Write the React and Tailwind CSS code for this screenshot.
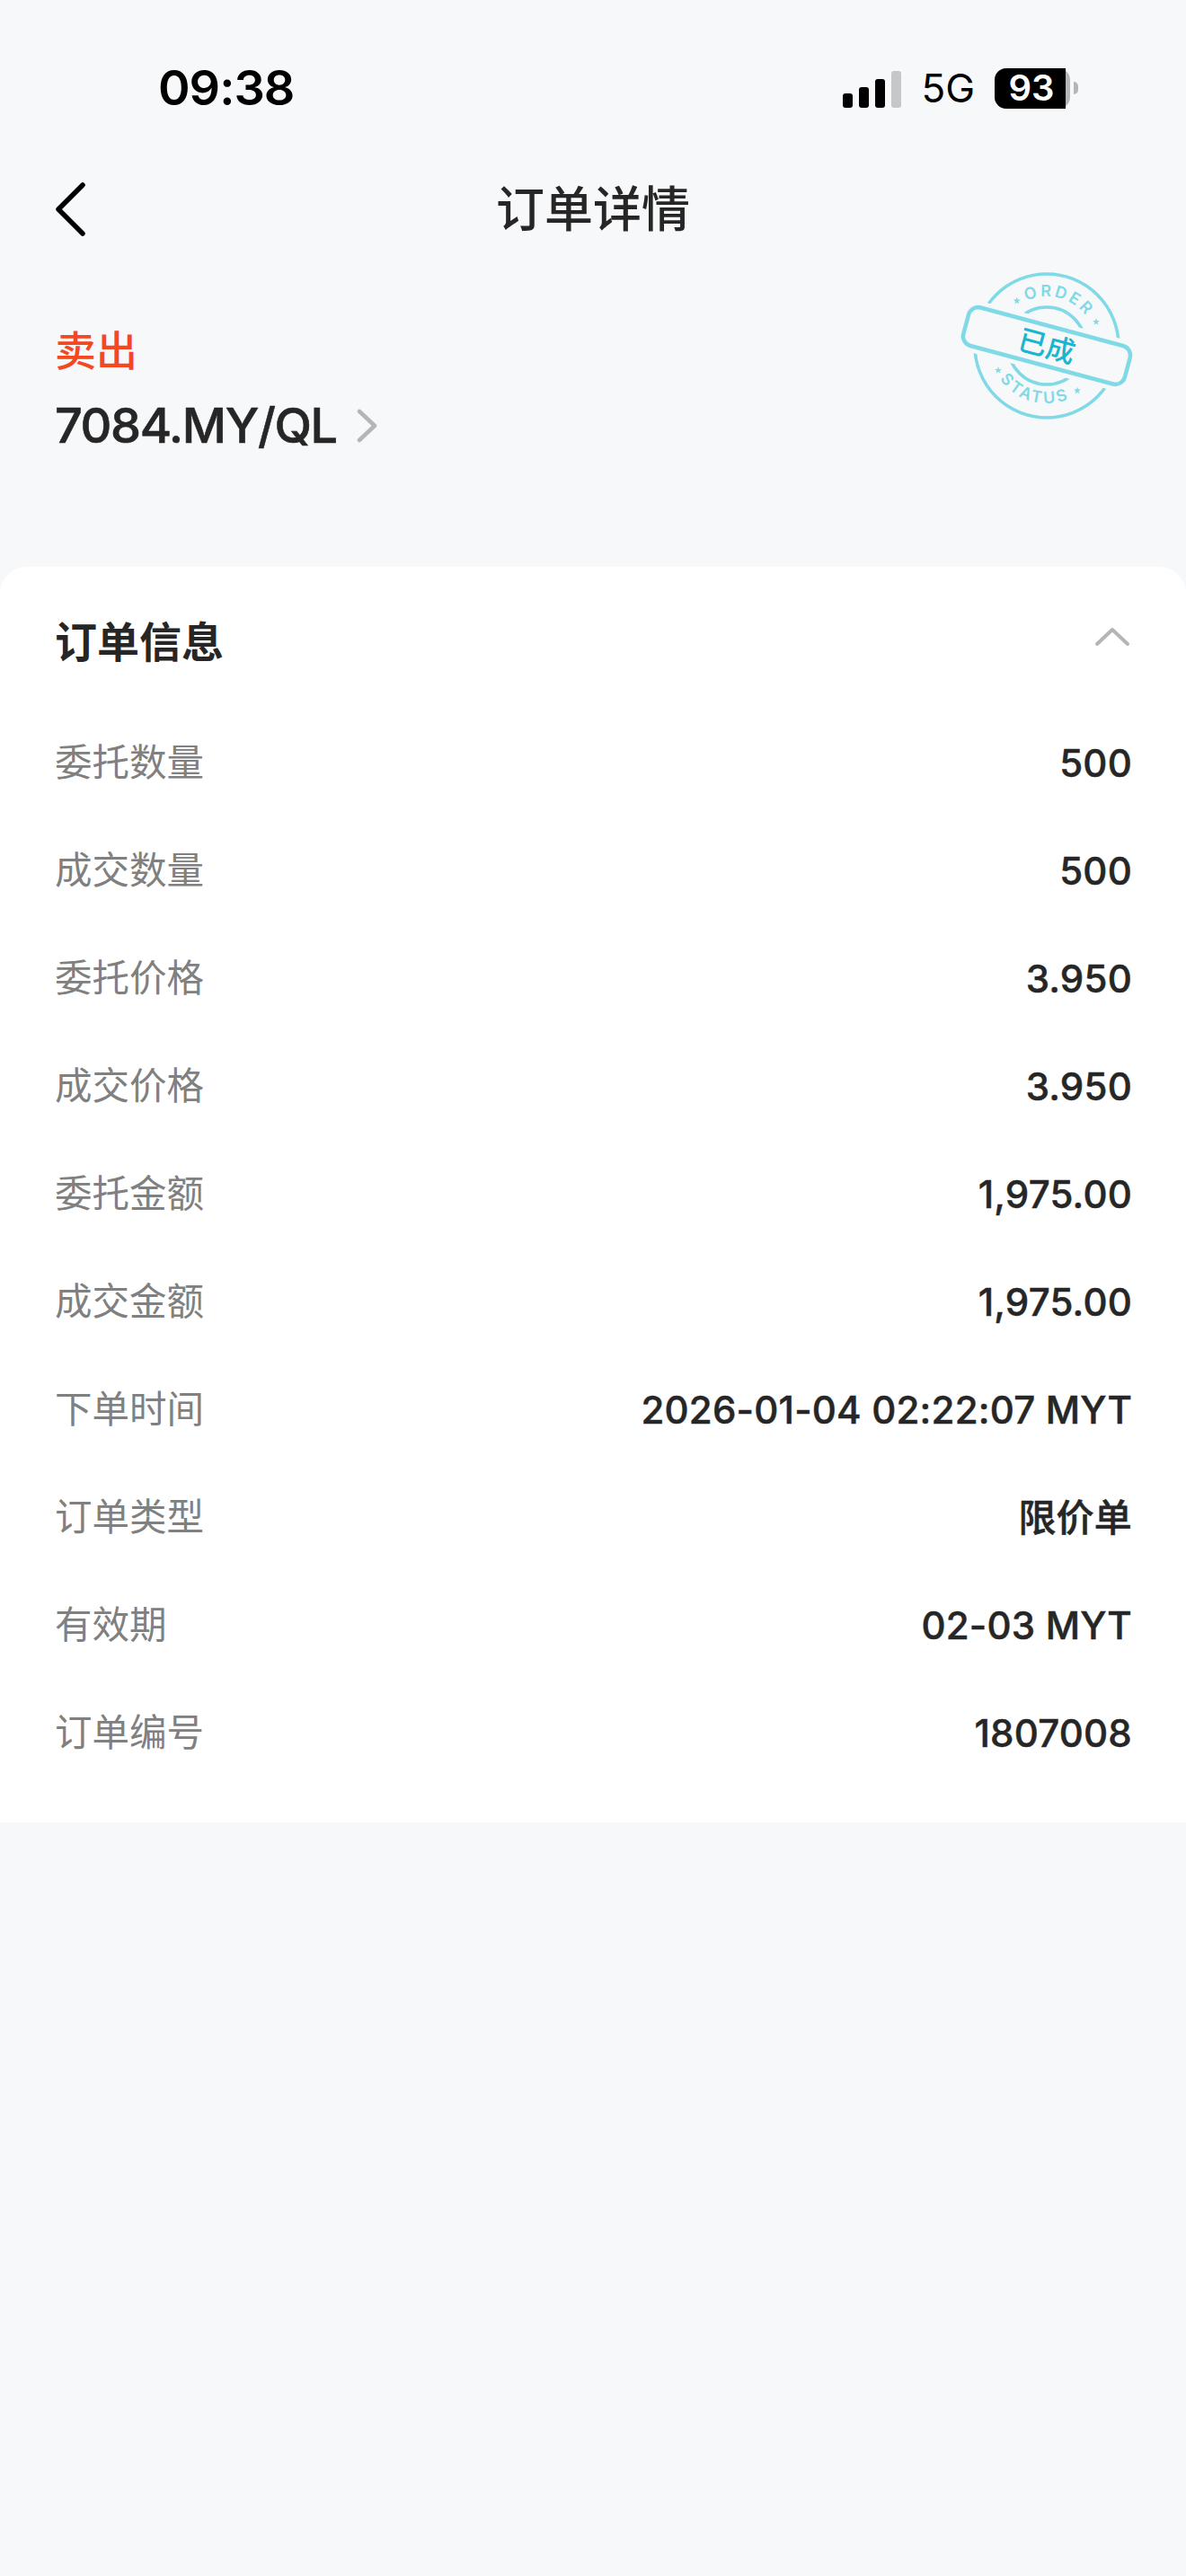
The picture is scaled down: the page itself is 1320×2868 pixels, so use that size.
const FONT = "font-['Inter','Noto_Sans_CJK_SC',sans-serif]";

const rows = [
  ["委托数量", "500"],
  ["成交数量", "500"],
  ["委托价格", "3.950"],
  ["成交价格", "3.950"],
  ["委托金额", "1,975.00"],
  ["成交金额", "1,975.00"],
  ["下单时间", "2026-01-04 02:22:07 MYT"],
  ["订单类型", "限价单"],
  ["有效期", "02-03 MYT"],
  ["订单编号", "1807008"],
];

function Star({ x, y }) {
  const pts = [];
  for (let i = 0; i < 10; i++) {
    const r = i % 2 ? 1.7 : 4.2;
    const a = (Math.PI / 5) * i - Math.PI / 2;
    pts.push(`${x + r * Math.cos(a)},${y + r * Math.sin(a)}`);
  }
  return <polygon points={pts.join(" ")} fill="#7fd9e6" />;
}

// 已成 stamp, drawn in a 230x190 box
function Stamp() {
  return (
    <svg width="230" height="190" viewBox="0 0 230 190" className="shrink-0">
      <defs>
        <path id="stamp-top" d="M60 95 A55 55 0 0 1 170 95" />
        <path id="stamp-bottom" d="M51 95 A64 64 0 0 0 179 95" />
      </defs>
      <g fill="none" stroke="#7fd9e6">
        <circle cx="115" cy="95" r="80" strokeWidth="3.5" />
        <circle cx="115" cy="95" r="43" strokeWidth="3.5" />
      </g>
      <Star x={81.7} y={45} />
      <Star x={170} y={68.3} />
      <Star x={61} y={122.3} />
      <Star x={149} y={145} />
      <g transform="rotate(15 115 95)">
        <text fontSize="18" letterSpacing="3" fill="#7fd9e6" fontFamily="Inter, sans-serif" fontWeight="600" textAnchor="middle">
          <textPath href="#stamp-top" startOffset="50%">ORDER</textPath>
        </text>
        <text fontSize="18" letterSpacing="3" fill="#7fd9e6" fontFamily="Inter, sans-serif" fontWeight="600" textAnchor="middle">
          <textPath href="#stamp-bottom" startOffset="50%">STATUS</textPath>
        </text>
        <rect x="22" y="73" width="186" height="44" rx="11" fill="#f7f8fa" stroke="#f7f8fa" strokeWidth="14" />
        <rect x="22" y="73" width="186" height="44" rx="11" fill="#f7f8fa" stroke="#7fd9e6" strokeWidth="4.5" />
        <text x="115" y="107" fontSize="32" fontWeight="500" fill="#19b5d1" textAnchor="middle" fontFamily="'Noto Sans CJK SC', sans-serif">已成</text>
      </g>
    </svg>
  );
}

function StatusBar() {
  return (
    <div className="flex items-center h-[140px] pt-[56px] pl-[176px] pr-[120px] justify-between">
      <span className="text-[54px] leading-none font-semibold tracking-[-1px] text-black">09:38</span>
      <div className="flex items-center">
        <div className="flex items-end gap-[7px] h-[41px] mt-[2px]">
          <div className="w-[11px] h-[16px] rounded-[3px] bg-black" />
          <div className="w-[11px] h-[23px] rounded-[3px] bg-black" />
          <div className="w-[11px] h-[32px] rounded-[3px] bg-black" />
          <div className="w-[11px] h-[41px] rounded-[3px] bg-[#c6c7c9]" />
        </div>
        <span className="ml-[22px] text-[44px] leading-none text-black">5G</span>
        <div className="ml-[22px] relative flex items-center justify-center w-[84px] h-[45px] rounded-[13px] bg-[#b5b6b8]">
          <div className="absolute left-0 top-0 h-full w-[79px] bg-black rounded-l-[13px]" />
          <span className="relative pr-[2px] text-[40px] leading-none font-semibold text-white">93</span>
        </div>
        <div className="ml-[4px] w-[5px] h-[14px] rounded-r-full bg-[#b5b6b8]" />
      </div>
    </div>
  );
}

export default function App() {
  return (
    <div className={`${FONT} w-full min-h-[2868px] bg-[#f7f8fa] text-[#262626]`}>
      <StatusBar />

      <header className="relative flex items-center justify-center h-[112px] mt-[38px]">
        <svg width="36" height="60" viewBox="0 0 36 60" className="absolute left-[61px] top-[25px]" fill="none" stroke="#000" strokeWidth="5.5" strokeLinecap="round" strokeLinejoin="round">
          <path d="M31 3 L4 30 L31 57" />
        </svg>
        <h1 className="text-[54px] leading-none font-medium">订单详情</h1>
      </header>

      <div className="flex justify-between items-start pl-[61px] pr-[40px] h-[341px]">
        <div className="pt-[77px]">
          <p className="text-[46px] leading-none font-medium text-[#f4481f]">卖出</p>
          <div className="flex items-center mt-[29px]">
            <span className="text-[54px] leading-[64px] font-medium tracking-[-1.4px] [-webkit-text-stroke:0.6px_#262626]">7084.MY/QL</span>
            <svg width="24" height="38" viewBox="0 0 24 38" className="ml-[22px]" fill="none" stroke="#b5b5b5" strokeWidth="4.5" strokeLinecap="round" strokeLinejoin="round">
              <path d="M3 3 L20 19 L3 35" />
            </svg>
          </div>
        </div>
        <Stamp />
      </div>

      <section className="bg-white rounded-t-[30px] h-[1398px] pl-[61px] pr-[60px]">
        <div className="flex items-center justify-between h-[159px] pt-[10px] pb-[2px]">
          <h2 className="text-[47px] leading-none font-semibold">订单信息</h2>
          <svg width="40" height="22" viewBox="0 0 40 22" className="mb-[12px] mr-[2px]" fill="none" stroke="#b5b5b5" strokeWidth="4" strokeLinecap="round" strokeLinejoin="round">
            <path d="M3 19 L20 3 L37 19" />
          </svg>
        </div>
        <div>
          {rows.map(([label, value]) => (
            <div key={label} className="flex items-center justify-between h-[120px]">
              <span className="text-[41.5px] leading-none text-[#808080]">{label}</span>
              <span className="text-[42px] leading-none font-medium tracking-[0.2px] [-webkit-text-stroke:0.5px_#262626]">{value}</span>
            </div>
          ))}
        </div>
      </section>
    </div>
  );
}
